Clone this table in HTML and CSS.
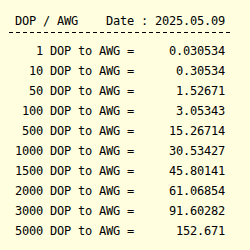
FILE: index.html
```html
<!DOCTYPE html>
<html>
<head>
<meta charset="utf-8">
<link rel="stylesheet" href="styles.css">
</head>
<body>
<div class="box">
  <div class="head"><span>DOP / AWG</span><span>Date : 2025.05.09</span></div>
  <div class="rule"></div>
  <div class="rows">
    <div class="row"><span class="amt">1</span><span class="lbl"> DOP to AWG =</span><span class="val">0.030534</span></div>
    <div class="row"><span class="amt">10</span><span class="lbl"> DOP to AWG =</span><span class="val">0.30534</span></div>
    <div class="row"><span class="amt">50</span><span class="lbl"> DOP to AWG =</span><span class="val">1.52671</span></div>
    <div class="row"><span class="amt">100</span><span class="lbl"> DOP to AWG =</span><span class="val">3.05343</span></div>
    <div class="row"><span class="amt">500</span><span class="lbl"> DOP to AWG =</span><span class="val">15.26714</span></div>
    <div class="row"><span class="amt">1000</span><span class="lbl"> DOP to AWG =</span><span class="val">30.53427</span></div>
    <div class="row"><span class="amt">1500</span><span class="lbl"> DOP to AWG =</span><span class="val">45.80141</span></div>
    <div class="row"><span class="amt">2000</span><span class="lbl"> DOP to AWG =</span><span class="val">61.06854</span></div>
    <div class="row"><span class="amt">3000</span><span class="lbl"> DOP to AWG =</span><span class="val">91.60282</span></div>
    <div class="row"><span class="amt">5000</span><span class="lbl"> DOP to AWG =</span><span class="val">152.671</span></div>
  </div>
</div>
</body>
</html>
```
FILE: styles.css
```css
html, body {
  margin: 0;
  padding: 0;
  background: #ffffe0;
}
body {
  font-family: "DejaVu Sans Mono", monospace;
  font-size: 12px;
  letter-spacing: -0.22px;
  color: #000;
}
.box {
  padding: 11px 8px 0 8px;
}
.head {
  display: flex;
  justify-content: space-between;
  width: 210px;
  padding-left: 7px;
  line-height: 20px;
}
.rule {
  margin: 1px 0 8px 1px;
  width: 221px;
  height: 1px;
  background: repeating-linear-gradient(to right, #000 0 4px, transparent 4px 7px);
}
.rows {
  display: flex;
  flex-direction: column;
}
.row {
  display: flex;
  width: 210px;
  padding-left: 7px;
  line-height: 20px;
}
.amt {
  width: 28px;
  text-align: right;
}
.lbl {
  white-space: pre;
}
.val {
  margin-left: auto;
}
```
